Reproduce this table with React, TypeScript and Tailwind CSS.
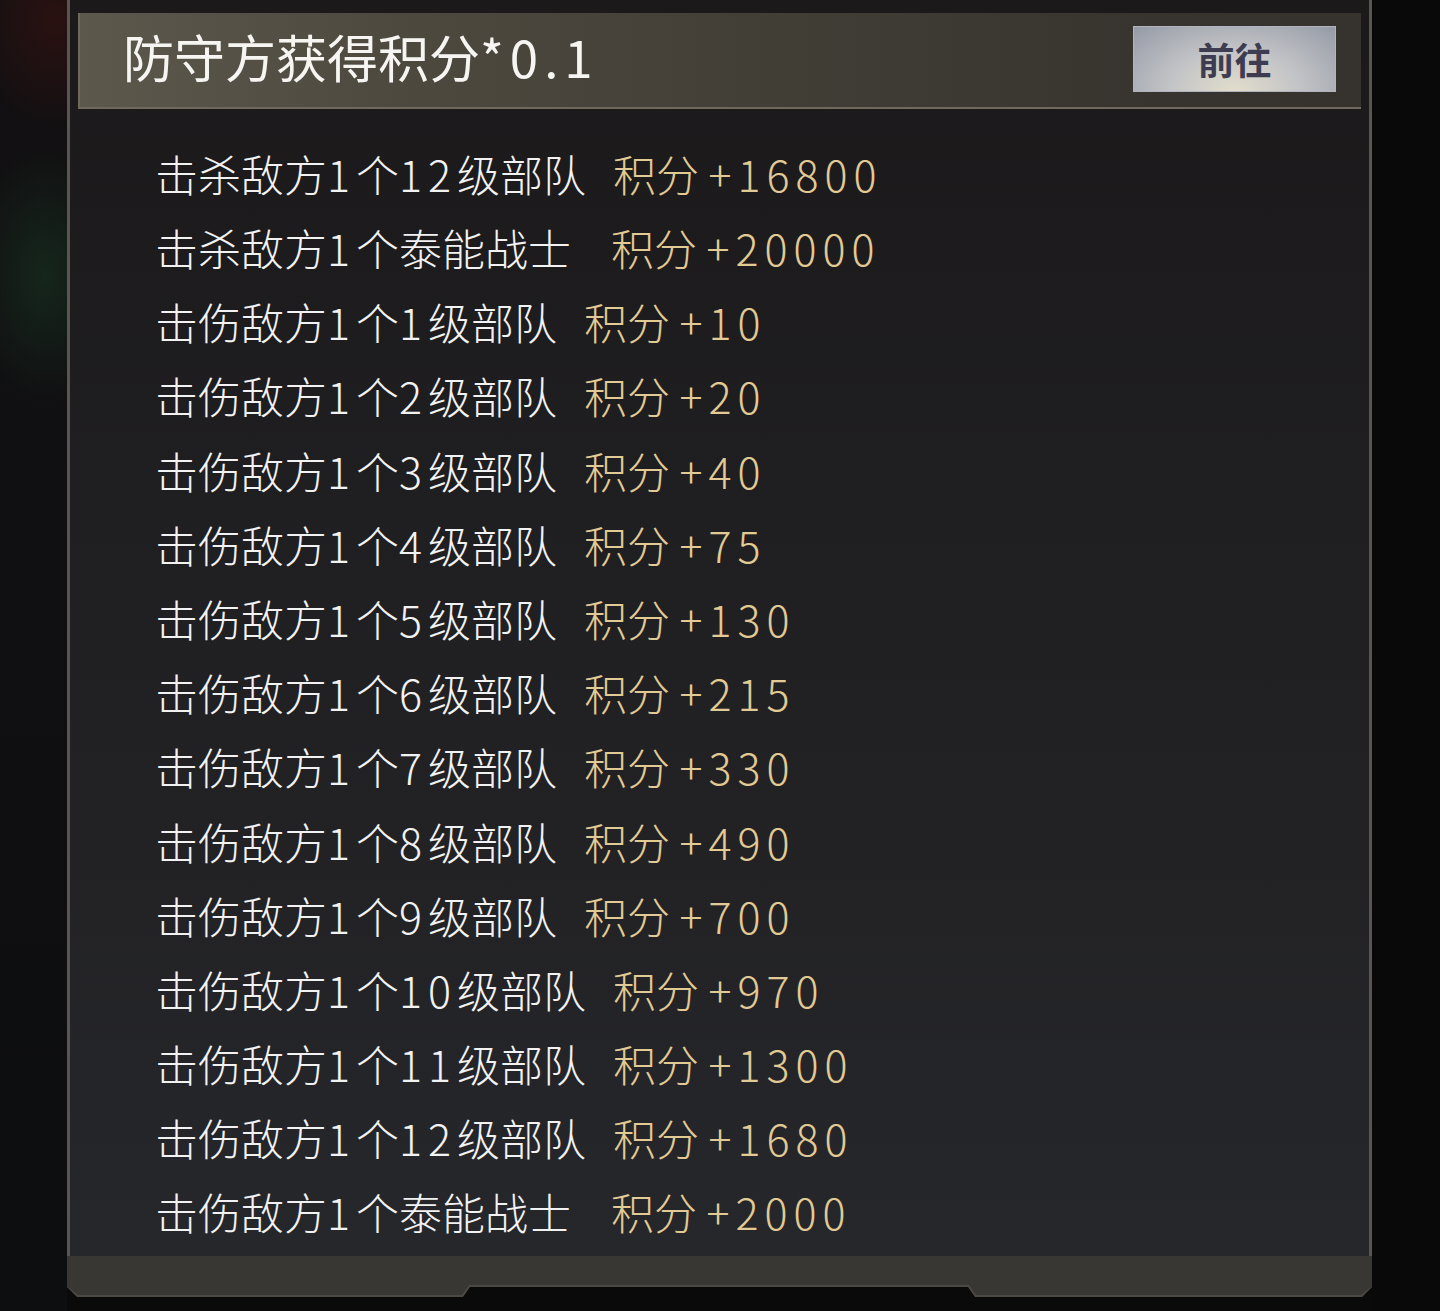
import React from 'react';

const rows = [
    { label: "击杀敌方1个12级部队", points: "16800" },
    { label: "击杀敌方1个泰能战士", points: "20000", wide: true },
    { label: "击伤敌方1个1级部队", points: "10" },
    { label: "击伤敌方1个2级部队", points: "20" },
    { label: "击伤敌方1个3级部队", points: "40" },
    { label: "击伤敌方1个4级部队", points: "75" },
    { label: "击伤敌方1个5级部队", points: "130" },
    { label: "击伤敌方1个6级部队", points: "215" },
    { label: "击伤敌方1个7级部队", points: "330" },
    { label: "击伤敌方1个8级部队", points: "490" },
    { label: "击伤敌方1个9级部队", points: "700" },
    { label: "击伤敌方1个10级部队", points: "970" },
    { label: "击伤敌方1个11级部队", points: "1300" },
    { label: "击伤敌方1个12级部队", points: "1680" },
    { label: "击伤敌方1个泰能战士", points: "2000", wide: true },
];

// the game font has wide latin digits, so spread them out a bit
function Mixed({ text, digitClass }: { text: string; digitClass: string }) {
    const parts = text.split(/([+*.\d]+)/);
    return (
        <>
            {parts.map((part, i) =>
                i % 2 === 1 ? (
                    <span key={i} className={digitClass}>{part}</span>
                ) : (
                    <span key={i}>{part}</span>
                )
            )}
        </>
    );
}

function BottomBand() {
    return (
        <div className="h-[41px] w-[1305px] bg-[#4c4945] [clip-path:polygon(0_0,1305px_0,1305px_31px,1295px_41px,908px_41px,901px_31px,403px_31px,396px_41px,10px_41px,0_31px)]">
            <div className="h-[39px] w-[1305px] bg-[#393734] [clip-path:polygon(0_0,1305px_0,1305px_30px,1294px_39px,909px_39px,902px_29px,402px_29px,395px_39px,11px_39px,0_30px)]" />
        </div>
    );
}

export default function App() {
    return (
        <div className="flex h-[1311px] w-[1440px] overflow-hidden bg-[#0a0a0b] font-['Noto_Sans_CJK_SC',sans-serif]">
            <div className="h-full w-[67px] bg-[radial-gradient(90px_110px_at_55px_20px,#2a1111_0%,rgba(30,14,14,0)_100%),radial-gradient(80px_130px_at_45px_275px,#15261c_0%,rgba(20,36,26,0)_100%),linear-gradient(180deg,#121012_0%,#0d0e10_100%)]" />

            <div className="flex w-[1305px] flex-col">
                <div className="flex h-[1256px] flex-col border-x-[3px] border-[#5a5551] bg-[linear-gradient(180deg,#1b191a_0%,#1f1e20_40%,#26272b_100%)]">
                    <div className="mx-[8px] mt-[13px] flex h-[96px] items-start justify-between border-b-2 border-l-2 border-[#6f695d] bg-[linear-gradient(90deg,#5c584c_0%,#4d493f_25%,#413e36_55%,#37342f_85%,#36332e_100%)]">
                        <div className="self-center pl-[43px] pb-[7px] text-[51px] font-normal leading-none text-[#f6f5f2]">
                            <Mixed text="防守方获得积分*0.1" digitClass="tracking-[6px]" />
                        </div>
                        <button className="mr-[25px] mt-[13px] flex h-[66px] w-[203px] items-center justify-center border border-[#b1b4bc] bg-[radial-gradient(ellipse_at_50%_100%,#e2ddcb_0%,#c3c4c7_45%,#959aa6_100%)] text-[37px] font-bold leading-none text-[#3d3c50]">
                            前往
                        </button>
                    </div>

                    <div className="flex flex-col pl-[85px] pt-[27px] text-[43px] font-light">
                        {rows.map((row) => (
                            <div key={row.label} className="flex h-[74.2px] items-center whitespace-pre">
                                <span className="text-[#f2f2f2]">
                                    <Mixed text={row.label} digitClass="tracking-[6px]" />
                                </span>
                                <span className={row.wide ? "ml-[40px] text-[#e2ca95]" : "ml-[27px] text-[#e2ca95]"}>
                                    积分 <Mixed text={"+" + row.points} digitClass="tracking-[6px]" />
                                </span>
                            </div>
                        ))}
                    </div>
                </div>
                <BottomBand />
            </div>

            <div className="h-full w-[68px] bg-[#09090a]" />
        </div>
    );
}
